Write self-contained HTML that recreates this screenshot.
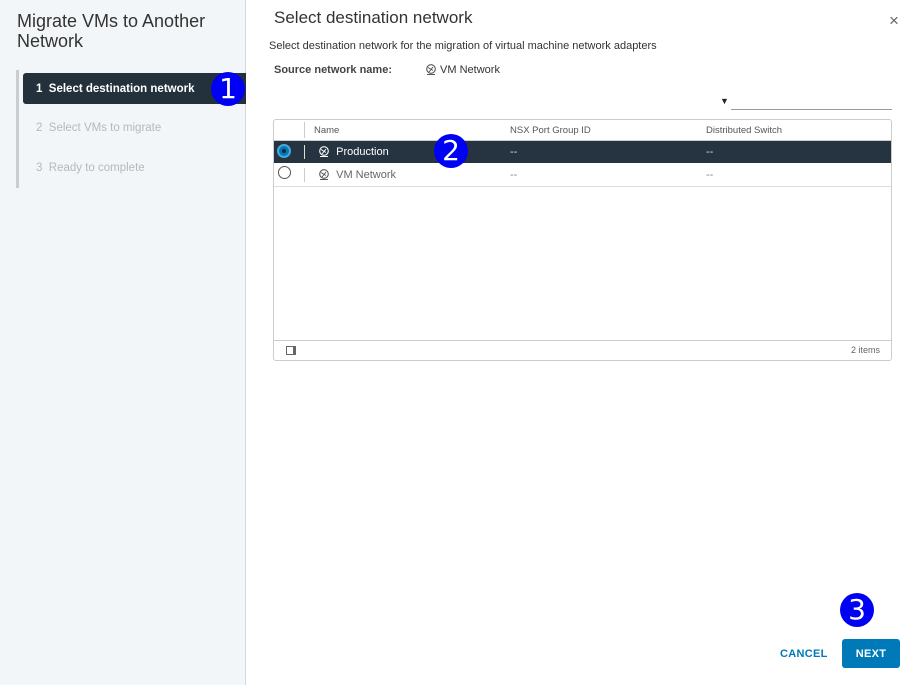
<!DOCTYPE html>
<html><head><style>
*{margin:0;padding:0;box-sizing:border-box}
body{width:913px;height:685px;position:relative;background:#fff;font-family:"Liberation Sans","DejaVu Sans",sans-serif;overflow:hidden;color:#333}
.a{position:absolute}
.badge{position:absolute;width:34px;height:34px;border-radius:50%;background:#0000f5;color:#fff;font-size:28px;line-height:34px;text-align:center;font-family:"DejaVu Sans",sans-serif}
.net{display:inline-block;vertical-align:middle}
</style></head><body>
<div class="a" style="left:0;top:0;width:246px;height:685px;background:#f3f6f8;border-right:1px solid #d4d8db"></div>
<div class="a" style="left:17px;top:11px;font-size:18px;line-height:20px;color:#333">Migrate VMs to Another<br>Network</div>
<div class="a" style="left:16px;top:70px;width:3px;height:118px;background:#c9cdd0"></div>
<div class="a" style="left:23px;top:73px;width:223px;height:31px;background:#22313b;border-radius:3px 0 0 3px;color:#fff;font-size:11.5px;font-weight:bold;line-height:32px;padding-left:13px">1&nbsp;&nbsp;Select destination network</div>
<div class="a" style="left:36px;top:122px;font-size:11.5px;color:#b5b9bc">2&nbsp;&nbsp;Select VMs to migrate</div>
<div class="a" style="left:36px;top:162px;font-size:11.5px;color:#b5b9bc">3&nbsp;&nbsp;Ready to complete</div>
<div class="badge" style="left:211px;top:72px">1</div>

<div class="a" style="left:274px;top:8px;font-size:17px;color:#333">Select destination network</div>
<div class="a" style="left:889px;top:11px;font-size:17px;color:#666">×</div>
<div class="a" style="left:269px;top:40px;font-size:11px;color:#333">Select destination network for the migration of virtual machine network adapters</div>
<div class="a" style="left:274px;top:64px;font-size:11px;font-weight:bold;color:#444">Source network name:</div>
<div class="a" style="left:425px;top:64px;font-size:11px;color:#333"><svg class="net" width="12" height="12" viewBox="0 0 12 12"><circle cx="6" cy="5" r="4.3" fill="none" stroke="#555" stroke-width="1.1"/><path d="M3 3.5l5 3M4 8l4-5M2 10.5h8" stroke="#555" stroke-width="1" fill="none"/></svg> VM Network</div>
<div class="a" style="left:720px;top:96px;font-size:9px;color:#222">▼</div>
<div class="a" style="left:731px;top:109px;width:161px;height:1px;background:#999"></div>

<div class="a" style="left:273px;top:119px;width:619px;height:242px;border:1px solid #ccc;border-radius:3px"></div>
<div class="a" style="left:274px;top:140px;width:617px;height:1px;background:#ccc"></div>
<div class="a" style="left:304px;top:122px;width:1px;height:16px;background:#ccc"></div>
<div class="a" style="left:314px;top:125px;font-size:9.5px;color:#555">Name</div>
<div class="a" style="left:510px;top:125px;font-size:9.5px;color:#555">NSX Port Group ID</div>
<div class="a" style="left:706px;top:125px;font-size:9.5px;color:#555">Distributed Switch</div>
<div class="a" style="left:274px;top:141px;width:617px;height:22px;background:#253440"></div>
<div class="a" style="left:277px;top:144px;width:14px;height:14px;border-radius:50%;background:#0079b8;border:2px solid #49a7d8"></div>
<div class="a" style="left:282px;top:149px;width:4px;height:4px;border-radius:50%;background:#1a2a35"></div>
<div class="a" style="left:304px;top:145px;width:1px;height:14px;background:#ddd"></div>
<div class="a" style="left:318px;top:146px;font-size:11px;color:#fff"><svg class="net" width="12" height="12" viewBox="0 0 12 12"><circle cx="6" cy="5" r="4.3" fill="none" stroke="#fff" stroke-width="1.1"/><path d="M3 3.5l5 3M4 8l4-5M2 10.5h8" stroke="#fff" stroke-width="1" fill="none"/></svg>&nbsp; Production</div>
<div class="a" style="left:510px;top:146px;font-size:11px;color:#ddd">--</div>
<div class="a" style="left:706px;top:146px;font-size:11px;color:#ddd">--</div>
<div class="a" style="left:274px;top:186px;width:617px;height:1px;background:#ddd"></div>
<div class="a" style="left:278px;top:166px;width:13px;height:13px;border-radius:50%;border:1px solid #555"></div>
<div class="a" style="left:304px;top:168px;width:1px;height:14px;background:#ccc"></div>
<div class="a" style="left:318px;top:169px;font-size:11px;color:#666"><svg class="net" width="12" height="12" viewBox="0 0 12 12"><circle cx="6" cy="5" r="4.3" fill="none" stroke="#555" stroke-width="1.1"/><path d="M3 3.5l5 3M4 8l4-5M2 10.5h8" stroke="#555" stroke-width="1" fill="none"/></svg>&nbsp; VM Network</div>
<div class="a" style="left:510px;top:169px;font-size:11px;color:#888">--</div>
<div class="a" style="left:706px;top:169px;font-size:11px;color:#888">--</div>
<div class="badge" style="left:434px;top:134px">2</div>
<div class="a" style="left:274px;top:340px;width:617px;height:1px;background:#ccc"></div>
<div class="a" style="left:286px;top:346px;width:10px;height:9px;border:1px solid #666;border-right:3px solid #666"></div>
<div class="a" style="left:851px;top:345px;font-size:9px;color:#666">2 items</div>

<div class="badge" style="left:840px;top:593px">3</div>
<div class="a" style="left:780px;top:648px;font-size:11px;font-weight:bold;color:#0079b8;letter-spacing:.3px">CANCEL</div>
<div class="a" style="left:842px;top:639px;width:58px;height:29px;background:#0079b8;border-radius:3px;color:#fff;font-size:11px;font-weight:bold;line-height:30px;text-align:center;letter-spacing:.3px">NEXT</div>
</body></html>
